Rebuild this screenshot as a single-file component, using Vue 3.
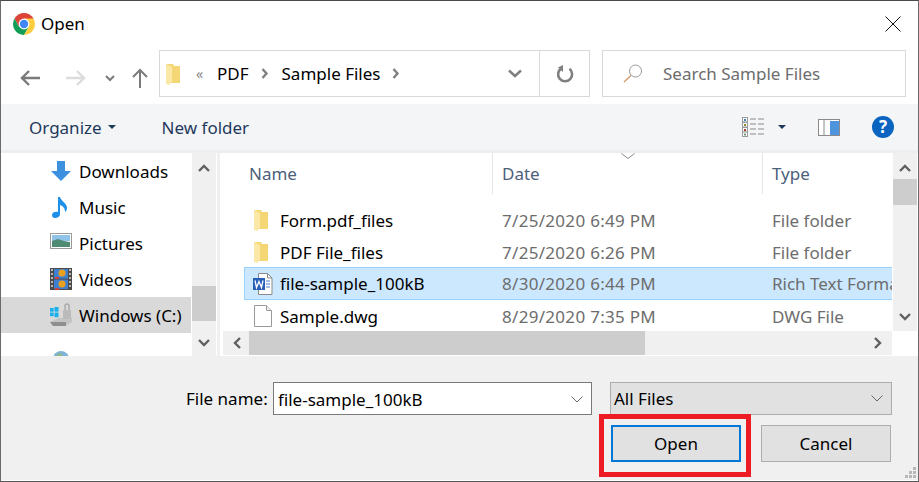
<script setup>
const places = [
  { name: 'Downloads', icon: 'down' },
  { name: 'Music', icon: 'music' },
  { name: 'Pictures', icon: 'pics' },
  { name: 'Videos', icon: 'video' },
  { name: 'Windows (C:)', icon: 'drive', active: true },
  { name: '', icon: 'globe' },
]
const files = [
  { name: 'Form.pdf_files', date: '7/25/2020 6:49 PM', type: 'File folder', icon: 'folder' },
  { name: 'PDF File_files', date: '7/25/2020 6:26 PM', type: 'File folder', icon: 'folder' },
  { name: 'file-sample_100kB', date: '8/30/2020 6:44 PM', type: 'Rich Text Format', icon: 'word', active: true },
  { name: 'Sample.dwg', date: '8/29/2020 7:35 PM', type: 'DWG File', icon: 'blank' },
]
</script>

<template>
  <div class="dialog">
    <div class="titlebar">
      <svg class="chrome" width="22" height="22" viewBox="1 1 22 22">
        <path d="M21.5 6.5A11 11 0 0 0 2.5 6.5L7 14.7 12 12Z" fill="#db4437" />
        <path d="M2.5 6.5A11 11 0 0 0 12 23L16.8 14.7 12 12 7 14.7Z" fill="#0f9d58" />
        <path d="M21.5 6.5A11 11 0 0 1 12 23L16.8 14.7 12 6.5Z" fill="#ffcd40" />
        <circle cx="12" cy="12" r="5.4" fill="#fff" />
        <circle cx="12" cy="12" r="4.2" fill="#4285f4" />
      </svg>
      <span class="title">Open</span>
      <svg class="close" width="16" height="16" viewBox="0 0 16 16">
        <path d="M.5.5l15 15M15.500.5l-15 15" stroke="#111" stroke-width="1" fill="none" />
      </svg>
    </div>

    <div class="navbar">
      <svg class="nav-back" width="20" height="16" viewBox="0 0 20 16">
        <path d="M1 8h19M9 1L2 8l7 7" stroke="#7a7a7a" stroke-width="2.4" fill="none" />
      </svg>
      <svg class="nav-fwd" width="20" height="16" viewBox="0 0 20 16">
        <path d="M0 8h19M11 1l7 7-7 7" stroke="#dcdcdc" stroke-width="2.4" fill="none" />
      </svg>
      <svg class="nav-recent" width="10" height="7" viewBox="0 0 10 7">
        <path d="M1 1l4 4 4-4" stroke="#7a7a7a" stroke-width="2" fill="none" />
      </svg>
      <svg class="nav-up" width="16" height="20" viewBox="0 0 16 20">
        <path d="M8 20V2M1 9l7-7 7 7" stroke="#7a7a7a" stroke-width="2" fill="none" />
      </svg>

      <div class="address">
        <svg class="addr-folder" width="15" height="22" viewBox="0 0 15 22">
          <path d="M0 1h7l1 2h6v17H3l-3 1Z" fill="#f5d675" />
          <path d="M0 1l6 3v15l-3 3-3-1Z" fill="#fbe7a6" />
        </svg>
        <span class="addr-more">«</span>
        <span class="crumb crumb-pdf">PDF</span>
        <svg class="crumb-sep first-sep" width="8" height="11" viewBox="0 0 8 11">
          <path d="M1.500 1l4 4.500-4 4.500" stroke="#7f7f7f" stroke-width="2.400" fill="none" />
        </svg>
        <span class="crumb crumb-files">Sample Files</span>
        <svg class="crumb-sep" width="8" height="11" viewBox="0 0 8 11">
          <path d="M1.500 1l4 4.500-4 4.500" stroke="#7f7f7f" stroke-width="2.400" fill="none" />
        </svg>
        <svg class="addr-drop" width="14" height="9" viewBox="0 0 14 9">
          <path d="M1 1.500l6 5.500 6-5.500" stroke="#7f7f7f" stroke-width="2.400" fill="none" />
        </svg>
        <div class="addr-refresh">
          <svg width="18" height="18" viewBox="0 0 18 18">
            <path d="M5 3.600A7 7 0 1 0 13.500 3.800" stroke="#7f7f7f" stroke-width="2.600" fill="none" />
            <path d="M7 0v7L2 2.500Z" fill="#7f7f7f" />
          </svg>
        </div>
      </div>

      <div class="search">
        <svg width="20" height="19" viewBox="0 0 20 19">
          <circle cx="12.500" cy="7" r="6" stroke="#9a9a9a" fill="none" />
          <path d="M8 11.500L1 18" stroke="#d49a68" stroke-width="1.400" />
        </svg>
        <span>Search Sample Files</span>
      </div>
    </div>

    <div class="toolbar">
      <span class="tool organize">Organize</span>
      <i class="caret organize-caret"></i>
      <span class="tool">New folder</span>
      <svg class="views" width="22" height="20" viewBox="0 0 22 20">
        <g fill="#fff" stroke="#9a9a9a">
          <rect x=".5" y=".5" width="5" height="4.500" />
          <rect x=".5" y="5.500" width="5" height="4.500" />
          <rect x=".5" y="10.500" width="5" height="4.500" />
          <rect x=".5" y="15" width="5" height="4.500" />
        </g>
        <rect x="2" y="2" width="2" height="2" fill="#3a7fb5" />
        <rect x="2" y="7" width="2" height="2" fill="#8a8a30" />
        <rect x="2" y="12" width="2" height="2" fill="#a83a20" />
        <rect x="2" y="16.500" width="2" height="2" fill="#7a9a7a" />
        <path d="M8 2h6M16 2h6M8 7h6M16 7h6M8 12h6M16 12h6M8 17h6M16 17h6" stroke="#8a8a8a" />
      </svg>
      <i class="caret views-caret"></i>
      <svg class="pane" width="22" height="17" viewBox="0 0 22 17">
        <rect x=".5" y=".5" width="21" height="16" fill="#fff" stroke="#8a8a8a" />
        <rect x="12" y="2" width="9" height="14" fill="#4d94dc" />
        <path d="M6 1v15" stroke="#8a8a8a" />
      </svg>
      <div class="help">?</div>
    </div>

    <div class="toolbar-edge"></div>

    <div class="browser">
      <div class="sidebar">
        <div v-for="p in places" :key="p.icon" class="place" :class="{ active: p.active }">
          <svg class="place-icon" :class="{ globe: p.icon === 'globe' }" width="22" height="24" viewBox="0 0 22 24">
            <template v-if="p.icon === 'down'">
              <path d="M7 2h8v10h6l-10 10L1 12h6Z" fill="#3d8fe0" />
            </template>
            <template v-else-if="p.icon === 'music'">
              <path d="M8 2h2c1 4 7 6 7 11 0 2-1 3-2 4 0-4-2-6-5-7v9c0 3-3 4-5 4s-3-1-3-3c0-3 4-4 6-3Z" fill="#1e90e8" />
            </template>
            <template v-else-if="p.icon === 'pics'">
              <rect x=".5" y="2.500" width="21" height="15" fill="#fff" stroke="#9a9a9a" />
              <rect x="2" y="4" width="18" height="6" fill="#8fc3e8" />
              <path d="M2 10l6-2 6 2 6 1v5H2Z" fill="#4f8a72" />
            </template>
            <template v-else-if="p.icon === 'video'">
              <rect x="0" y="1" width="22" height="22" fill="#4a4a4a" />
              <rect x="4" y="2" width="14" height="9.500" fill="#3f7fd0" />
              <rect x="4" y="12.500" width="14" height="9.500" fill="#3f7fd0" />
              <circle cx="12" cy="6" r="3.500" fill="#e8a020" />
              <circle cx="12" cy="17" r="3.500" fill="#e8a020" />
              <path d="M5 11h4M5 22h4" stroke="#d04030" stroke-width="2" />
              <path d="M1 3h2M1 7h2M1 11h2M1 15h2M1 19h2M19 3h2M19 7h2M19 11h2M19 15h2M19 19h2" stroke="#ddd" stroke-width="1.600" />
            </template>
            <template v-else-if="p.icon === 'drive'">
              <path d="M0 19l8-4h14v4l-6 4H3Z" fill="#c4c4c4" />
              <path d="M0 19h16v4H3Z" fill="#8f8f8f" />
              <rect x="0" y="5" width="3.700" height="3.700" fill="#19b0ee" />
              <rect x="4.500" y="4" width="4" height="4.700" fill="#19b0ee" />
              <rect x="0" y="9.500" width="3.700" height="3.700" fill="#19b0ee" />
              <rect x="4.500" y="9.500" width="4" height="4.700" fill="#19b0ee" />
              <rect x="13" y="7" width="8" height="9" rx="1" fill="#bbb" />
              <path d="M15 7V3a2 2 0 0 1 4 0v4" stroke="#aaa" stroke-width="1.500" fill="none" />
            </template>
            <template v-else>
              <circle cx="11" cy="11" r="8" fill="#7fb4d8" />
              <path d="M6 7l5-2 2 4-4 3Z" fill="#8fb88a" />
            </template>
          </svg>
          <span>{{ p.name }}</span>
        </div>
      </div>

      <div class="scroll-v side-scroll">
        <svg width="12" height="8" viewBox="0 0 12 8"><path d="M1 7l5-5 5 5" stroke="#606060" stroke-width="2.400" fill="none" /></svg>
        <div class="thumb"></div>
        <svg width="12" height="8" viewBox="0 0 12 8"><path d="M1 1l5 5 5-5" stroke="#606060" stroke-width="2.400" fill="none" /></svg>
      </div>

      <div class="splitter"></div>

      <div class="pane-files">
        <div class="list">
          <div class="list-head">
            <span class="head-cell head-name">Name</span>
            <span class="head-cell head-date">Date</span>
            <span class="head-cell head-type">Type</span>
            <svg class="sort" width="14" height="6" viewBox="0 0 14 6">
              <path d="M.5.500L7 5.500 13.500.5" stroke="#8a8a8a" fill="none" />
            </svg>
          </div>
          <div v-for="f in files" :key="f.name" class="file" :class="{ active: f.active }">
            <div class="file-name">
              <svg width="20" height="24" viewBox="0 0 20 24">
                <template v-if="f.icon === 'folder'">
                  <path d="M1 2h7l1 2h6v17H4l-3 1Z" fill="#f5d675" />
                  <path d="M1 2l6 3v15l-3 3-3-1Z" fill="#fbe7a6" />
                </template>
                <template v-else-if="f.icon === 'word'">
                  <path d="M5.500 1.500h9l4.500 4.500v16.500H5.500Z" fill="#fff" stroke="#8a8a8a" />
                  <path d="M14.500 1.500V6h4.500" fill="none" stroke="#8a8a8a" />
                  <path d="M13 9h4M13 12h4M13 15h4" stroke="#4a80c8" />
                  <rect x="0" y="6" width="12" height="12" fill="#2a5fb8" />
                  <path d="M2 8.500l1.500 7 2.500-6 2.500 6 1.500-7" stroke="#fff" stroke-width="1.300" fill="none" />
                </template>
                <template v-else>
                  <path d="M1.500 1.500h12l5 5v16h-17Z" fill="#fff" stroke="#9a9a9a" />
                  <path d="M13.500 1.500v5h5" fill="#eee" stroke="#9a9a9a" />
                </template>
              </svg>
              <span>{{ f.name }}</span>
            </div>
            <div class="file-meta file-date">{{ f.date }}</div>
            <div class="file-meta">{{ f.type }}</div>
          </div>
        </div>

        <div class="scroll-h">
          <svg width="8" height="12" viewBox="0 0 8 12"><path d="M7 1L2 6l5 5" stroke="#606060" stroke-width="2.400" fill="none" /></svg>
          <div class="thumb-h"></div>
          <svg width="8" height="12" viewBox="0 0 8 12"><path d="M1 1l5 5-5 5" stroke="#606060" stroke-width="2.400" fill="none" /></svg>
        </div>
      </div>

      <div class="right-col">
        <div class="scroll-v list-scroll">
          <svg width="12" height="8" viewBox="0 0 12 8"><path d="M1 7l5-5 5 5" stroke="#606060" stroke-width="2.400" fill="none" /></svg>
          <div class="thumb"></div>
          <svg width="12" height="8" viewBox="0 0 12 8"><path d="M1 1l5 5 5-5" stroke="#606060" stroke-width="2.400" fill="none" /></svg>
        </div>
      </div>
    </div>

    <div class="footer">
      <div class="footer-row">
        <label class="name-label">File name:</label>
        <div class="name-input">
          <span>file-sample_100kB</span>
          <svg width="12" height="7" viewBox="0 0 12 7"><path d="M.5.500L6 6l5.500-5.500" stroke="#666" fill="none" /></svg>
        </div>
        <div class="filter">
          <span>All Files</span>
          <svg width="12" height="7" viewBox="0 0 12 7"><path d="M.5.500L6 6l5.500-5.500" stroke="#666" fill="none" /></svg>
        </div>
      </div>
      <div class="footer-actions">
        <button class="btn primary">Open</button>
        <button class="btn">Cancel</button>
      </div>
      <div class="highlight"></div>
      <svg class="grip" width="12" height="12" viewBox="0 0 12 12" fill="#b8b8b8">
        <rect x="8" y="0" width="3" height="3" />
        <rect x="4" y="4" width="3" height="3" />
        <rect x="8" y="4" width="3" height="3" />
        <rect x="0" y="8" width="3" height="3" />
        <rect x="4" y="8" width="3" height="3" />
        <rect x="8" y="8" width="3" height="3" />
      </svg>
    </div>
  </div>
</template>

<style scoped>
.dialog {
  position: relative;
  width: 919px;
  height: 482px;
  box-sizing: border-box;
  border: 1px solid #6a6a6a;
  border-top-color: #4a4a4a;
  border-bottom-color: #555;
  background: #fff;
  font-family: "Noto Sans", "Open Sans", sans-serif;
  font-size: 17px;
  color: #000;
  overflow: hidden;
}

.titlebar {
  height: 45px;
  display: flex;
  align-items: center;
  padding-left: 12px;
  padding-right: 17px;
}
.chrome { margin-right: 6px; margin-top: 0; }
.title { flex: 1; }

.navbar {
  height: 58px;
  box-sizing: border-box;
  display: flex;
  align-items: flex-start;
  padding-top: 4px;
}
.nav-back { margin: 20px 0 0 19px; }
.nav-fwd { margin: 20px 0 0 26px; }
.nav-recent { margin: 25px 0 0 19px; }
.nav-up { margin: 18px 0 0 17px; }

.address {
  width: 431px;
  height: 47px;
  box-sizing: border-box;
  margin-left: 11px;
  border: 1px solid #d9d9d9;
  display: flex;
  align-items: center;
}
.addr-folder { margin-left: 6px; }
.addr-more { margin-left: 15px; width: 12px; color: #8a8a8a; font-size: 14px; }
.crumb-pdf { margin-left: 9px; }
.crumb-sep { margin: 0 12px 0 12px; }
.first-sep { margin-right: 13px; }
.addr-drop { margin-left: 96px; }
.addr-refresh {
  height: 100%;
  flex: 1;
  margin-left: 17px;
  border-left: 1px solid #d9d9d9;
  display: flex;
  align-items: center;
  justify-content: center;
}

.search {
  width: 304px;
  height: 47px;
  box-sizing: border-box;
  margin-left: 12px;
  border: 1px solid #d9d9d9;
  display: flex;
  align-items: center;
  gap: 20px;
  padding-left: 20px;
  color: #6d6d6d;
  flex: none;
}

.toolbar {
  height: 46px;
  background: #f4f5f7;
  display: flex;
  align-items: center;
  color: #1e395b;
}
.organize { margin-left: 28px; }
.caret {
  width: 0;
  height: 0;
  border-left: 4px solid transparent;
  border-right: 4px solid transparent;
  border-top: 4px solid #1e395b;
}
.organize-caret { margin: 0 46px 0 6px; }
.views { margin-left: 493px; }
.views-caret { margin-left: 14px; }
.pane { margin-left: 32px; }
.help {
  width: 22px;
  height: 22px;
  margin-left: 32px;
  border-radius: 50%;
  background: #0a64c0;
  color: #fff;
  font-size: 17px;
  font-weight: 700;
  line-height: 22px;
  text-align: center;
}

.toolbar-edge {
  height: 3px;
  background: #eceef1;
}

.browser {
  height: 203px;
  display: flex;
}

.sidebar {
  width: 190px;
  margin-right: 1px;
  overflow: hidden;
}
.place {
  height: 36px;
  display: flex;
  align-items: center;
  padding-left: 49px;
  gap: 7px;
  white-space: nowrap;
}
.place.active { background: #d9d9d9; }
.place-icon { flex: none; }
.place-icon.globe { margin-top: 18px; }

.scroll-v {
  width: 24px;
  background: #f0f0f0;
  display: flex;
  flex-direction: column;
  align-items: center;
  box-sizing: border-box;
}
.side-scroll { padding-top: 11px; }
.side-scroll .thumb { margin: 114px 0 18px; height: 35px; }
.thumb {
  width: 100%;
  background: #cdcdcd;
}

.splitter {
  width: 5px;
  background: #f0f0f0;
  border-left: 1px solid #fff;
  border-right: 1px solid #fff;
  box-sizing: border-box;
}

.pane-files {
  width: 671px;
  display: flex;
  flex-direction: column;
}
.list {
  height: 178px;
  overflow: hidden;
  padding-left: 23px;
}
.list-head {
  position: relative;
  height: 41px;
  margin-bottom: 10px;
  display: flex;
  color: #4c607a;
}
.head-cell {
  display: flex;
  align-items: center;
  height: 100%;
  box-sizing: border-box;
}
.head-name { width: 249px; padding-left: 5px; border-right: 1px solid #e5e5e5; }
.head-date { width: 270px; padding-left: 9px; border-right: 1px solid #e5e5e5; }
.head-type { padding-left: 9px; }
.sort { position: absolute; left: 377px; top: 0; }

.file {
  height: 32px;
  box-sizing: border-box;
  display: grid;
  grid-template-columns: 258px 270px 200px;
  align-items: center;
  white-space: nowrap;
}
.file.active {
  height: 33px;
  margin-top: -1px;
  background: #cce8ff;
  border-top: 1px solid #99d1ff;
  border-bottom: 1px solid #99d1ff;
  box-shadow: inset 1px 0 #99d1ff;
}
.file-name {
  display: flex;
  align-items: center;
  gap: 7px;
  padding-left: 9px;
}
.file-meta { color: #6d6d6d; }
.file-date { letter-spacing: 0.3px; }

.scroll-h {
  height: 24px;
  margin-left: 2px;
  margin-bottom: 1px;
  background: #f0f0f0;
  display: flex;
  align-items: center;
  padding: 0 10px;
}
.thumb-h {
  flex: none;
  width: 396px;
  height: 100%;
  margin: 0 229px 0 8px;
  background: #cdcdcd;
}

.right-col {
  width: 25px;
  padding-left: 1px;
  box-sizing: border-box;
}
.list-scroll { height: 178px; padding-top: 11px; }
.list-scroll .thumb { margin: 7px 0 108px; height: 26px; }

.footer {
  position: relative;
  height: 124px;
  box-sizing: border-box;
  background: #f0f0f0;
  padding-top: 26px;
}
.footer-row {
  display: flex;
  align-items: center;
  height: 33px;
}
.name-label { width: 87px; margin-left: 185px; }
.name-input {
  width: 319px;
  height: 33px;
  box-sizing: border-box;
  border: 1px solid #7a7a7a;
  background: #fff;
  display: flex;
  align-items: center;
  justify-content: space-between;
  padding: 2px 8px 0 4px;
}
.filter {
  width: 282px;
  height: 33px;
  box-sizing: border-box;
  margin-left: 18px;
  border: 1px solid #adadad;
  background: #e1e1e1;
  display: flex;
  align-items: center;
  justify-content: space-between;
  padding: 0 8px 0 3px;
}
.footer-actions {
  display: flex;
  gap: 20px;
  margin: 10px 0 0 610px;
}
.btn {
  width: 130px;
  height: 37px;
  box-sizing: border-box;
  border: 1px solid #adadad;
  background: #e1e1e1;
  font: inherit;
  color: #000;
  padding: 0;
}
.btn.primary { border: 2px solid #0078d7; }

.highlight {
  position: absolute;
  left: 598px;
  top: 58px;
  width: 152px;
  height: 63px;
  box-sizing: border-box;
  border: 5px solid #ed1c24;
}
.grip {
  position: absolute;
  right: 1px;
  bottom: 1px;
}
</style>
